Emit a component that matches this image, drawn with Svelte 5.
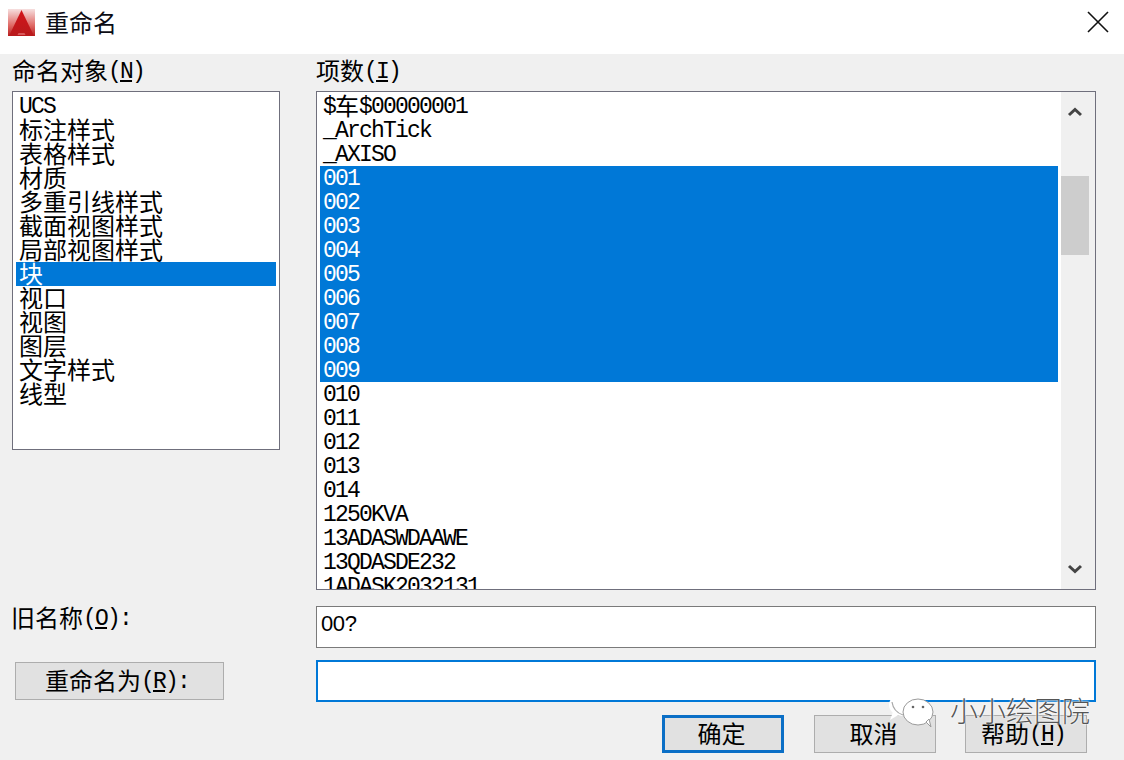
<script>
  const kinds = ['UCS','标注样式','表格样式','材质','多重引线样式','截面视图样式','局部视图样式','块','视口','视图','图层','文字样式','线型'];
  const items = ['$车$00000001','_ArchTick','_AXISO','001','002','003','004','005','006','007','008','009','010','011','012','013','014','1250KVA','13ADASWDAAWE','13QDASDE232','1ADASK2032131'];
  const parts = (s) => s.match(/[\u4e00-\u9fff]+|[^\u4e00-\u9fff]+/g).map((t) => ({ t, zh: /[\u4e00-\u9fff]/.test(t) }));
  const sel = (s) => /^00\d$/.test(s);
</script>

<div class="dialog">
  <header class="title">
    <svg class="logo" viewBox="0 0 28 28" aria-hidden="true">
      <defs>
        <linearGradient id="tile" x1="0" y1="0" x2="0" y2="1"><stop offset="0" stop-color="#f6dfdf"/><stop offset="0.6" stop-color="#e06a66"/><stop offset="1" stop-color="#b81f1f"/></linearGradient>
        <linearGradient id="tri" x1="0" y1="0" x2="0" y2="1"><stop offset="0" stop-color="#d3141a"/><stop offset="1" stop-color="#b81a1c"/></linearGradient>
      </defs>
      <rect width="27" height="27" fill="url(#tile)"/>
      <path d="M13.5 1 L1 27 H26 Z" fill="url(#tri)"/>
      <path d="M9.5 26 L10.5 24 H16.5 L17.5 26 Z" fill="#d9585a"/>
    </svg>
    <span class="title-text">重命名</span>
    <svg class="close" viewBox="0 0 22 22" aria-hidden="true"><path d="M1 1 L21 21 M21 1 L1 21" stroke="#111" stroke-width="1.6" fill="none"/></svg>
  </header>

  <main class="form">
    <section class="col">
      <div class="label"><span class="zh">命名对象</span><span class="mono">(<u>N</u>)</span></div>
      <div class="list left">
        {#each kinds as k}
          <div class="row" class:selected={k === '块'}>{#each parts(k) as p}<span class={p.zh ? 'zh' : 'mono'}>{p.t}</span>{/each}</div>
        {/each}
      </div>
    </section>
    <section class="col">
      <div class="label"><span class="zh">项数</span><span class="mono">(<u>I</u>)</span></div>
      <div class="list right">
        <div class="rows">
          {#each items as k}
            <div class="row" class:selected={sel(k)}>{#each parts(k) as p}<span class={p.zh ? 'zh' : 'mono'}>{p.t}</span>{/each}</div>
          {/each}
        </div>
        <div class="scrollbar">
          <svg class="chev" viewBox="0 0 16 10" aria-hidden="true"><path d="M2 8 L8 2.5 L14 8" fill="none" stroke="#444" stroke-width="3"/></svg>
          <div class="thumb"></div>
          <svg class="chev" viewBox="0 0 16 10" aria-hidden="true"><path d="M2 2 L8 7.5 L14 2" fill="none" stroke="#444" stroke-width="3"/></svg>
        </div>
      </div>
    </section>

    <div class="label old"><span class="zh">旧名称</span><span class="mono">(<u>O</u>):</span></div>
    <div class="input old-input">00?</div>

    <div class="cell"><button class="btn rename"><span class="zh">重命名为</span><span class="mono">(<u>R</u>):</span></button></div>
    <div class="input focus"></div>
  </main>

  <footer class="footer">
    <button class="btn primary"><span class="zh">确定</span></button>
    <button class="btn"><span class="zh">取消</span></button>
    <button class="btn help"><span class="zh">帮助</span><span class="mono">(<u>H</u>)</span></button>
  </footer>

  <div class="watermark">
    <svg class="wx" viewBox="0 0 48 36" aria-hidden="true">
      <ellipse cx="14" cy="13" rx="13" ry="11" fill="#fff"/>
      <path d="M5 20 L2 28 L12 22 Z" fill="#fff"/>
      <path d="M4 10 C5 17 9 21 15 23" fill="none" stroke="#a8a8a8" stroke-width="1.2"/>
      <ellipse cx="30" cy="20" rx="15" ry="13" fill="#fff" stroke="#9a9a9a" stroke-width="1"/>
      <path d="M38 30 L43 35 L41 27 Z" fill="#fff" stroke="#9a9a9a" stroke-width="1"/>
      <circle cx="25" cy="15" r="1.3" fill="#666"/>
      <circle cx="35" cy="15" r="1.3" fill="#666"/>
    </svg>
    <span class="wm-text">小小绘图院</span>
  </div>
</div>

<style>
  :global(body) { margin: 0; }
  .dialog {
    position: relative;
    width: 1124px;
    height: 760px;
    overflow: hidden;
    background: #f0f0f0;
    color: #000;
    display: flex;
    flex-direction: column;
  }
  .zh {
    font-family: "Noto Sans CJK SC", sans-serif;
    font-size: 24px;
    line-height: 24px;
    margin-bottom: 2px;
  }
  .mono {
    font-family: "Liberation Mono", monospace;
    font-size: 23px;
    letter-spacing: -1.8px;
    line-height: 24px;
    padding-top: 2px;
  }
  .title {
    height: 54px;
    flex: none;
    background: #fff;
    display: flex;
    align-items: center;
    padding: 0 14px 0 8px;
    box-sizing: border-box;
  }
  .logo { width: 28px; height: 28px; flex: none; margin-top: -9px; }
  .title-text {
    font-family: "Noto Sans CJK SC", sans-serif;
    font-size: 24px;
    line-height: 30px;
    margin-left: 9px;
    margin-top: -10px;
    color: #0c0c14;
  }
  .close { width: 22px; height: 22px; margin-left: auto; margin-top: -11px; margin-right: 1px; }
  .form {
    display: grid;
    grid-template-columns: 268px 780px;
    grid-template-rows: 536px 42px 42px;
    column-gap: 36px;
    row-gap: 16px;
    padding-left: 12px;
  }
  .form > :nth-child(5), .form > :nth-child(6) { margin-top: -4px; }
  .col { display: flex; flex-direction: column; min-height: 0; }
  .label {
    height: 34px;
    margin-bottom: 3px;
    flex: none;
    display: flex;
    align-items: center;
    white-space: nowrap;
  }
  .list {
    background: #fff;
    border: 1px solid #6f6f7c;
    box-sizing: border-box;
    overflow: hidden;
  }
  .left { height: 359px; padding: 2px 3px; }
  .right { height: 499px; display: flex; padding-top: 2px; }
  .rows { flex: 1; min-width: 0; padding: 0 3px; overflow: hidden; }
  .row {
    height: 24px;
    padding-left: 3px;
    white-space: nowrap;
    display: flex;
    align-items: center;
  }
  .row.selected { background: #0078d7; color: #fff; }
  .scrollbar {
    width: 34px;
    flex: none;
    margin-top: -2px;
    background: #f0f0f0;
    display: flex;
    flex-direction: column;
    align-items: flex-start;
  }
  .chev { width: 16px; height: 10px; margin-left: 6px; flex: none; }
  .chev:first-child { margin-top: 15px; }
  .chev:last-child { margin-top: auto; margin-bottom: 15px; }
  .thumb {
    width: 28px;
    height: 79px;
    margin-top: 59px;
    background: #cdcdcd;
  }
  .old { height: 24px; margin: 0 0 0 -1px; }
  .input {
    background: #fff;
    border: 1px solid #7a7a7a;
    box-sizing: border-box;
    height: 42px;
    padding-left: 4px;
    line-height: 34px;
    font-family: "Liberation Sans", sans-serif;
    font-size: 22px;
    letter-spacing: -0.4px;
  }
  .focus { border: 2px solid #0078d7; }
  .cell { display: flex; align-items: flex-start; padding-top: 2px; padding-left: 3px; }
  .btn {
    width: 122px;
    height: 38px;
    padding: 0 3px 0 0;
    margin: 0;
    box-sizing: border-box;
    background: #e1e1e1;
    border: 1px solid #adadad;
    color: #000;
    white-space: nowrap;
    display: flex;
    align-items: center;
    justify-content: center;
  }
  .rename { width: 209px; padding-right: 5px; }
  .help { padding-right: 6px; }
  .footer {
    display: flex;
    justify-content: flex-end;
    gap: 30px;
    margin-top: 9px;
    padding-right: 37px;
  }
  .footer .btn:last-child { margin-left: -1px; }
  .primary { border: 3px solid #0b6fc6; }
  .watermark {
    position: absolute;
    left: 888px;
    top: 692px;
    display: flex;
    align-items: center;
    pointer-events: none;
  }
  .wx { width: 48px; height: 36px; flex: none; }
  .wm-text {
    font-family: "Noto Sans CJK SC", sans-serif;
    font-size: 28px;
    line-height: 32px;
    margin-left: 14px;
    margin-top: -1px;
    color: #555;
    font-weight: 300;
    text-shadow: 0 0 2px #fff, 0 0 2px #fff;
  }
</style>
